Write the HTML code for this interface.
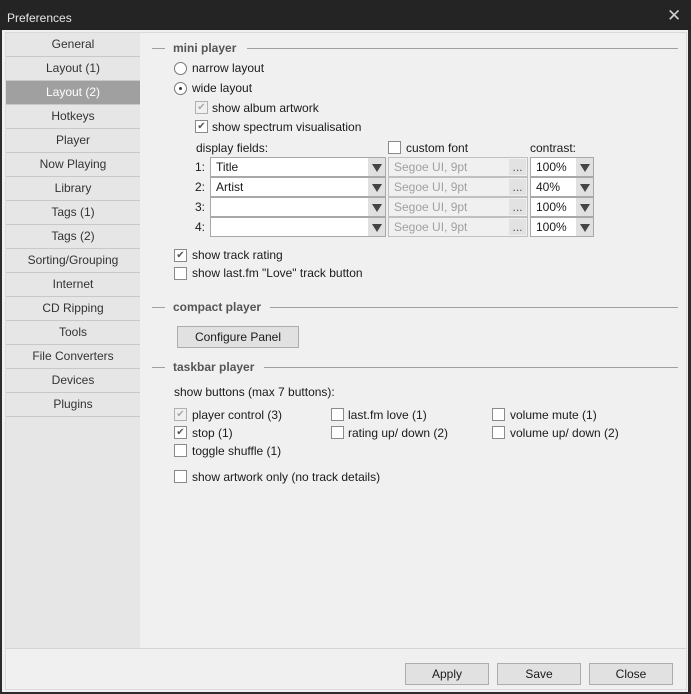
<!DOCTYPE html>
<html><head><style>
*{margin:0;padding:0;box-sizing:border-box}
body{width:691px;height:694px;background:#2b2b2b;font-family:"Liberation Sans",sans-serif;font-size:12px;color:#1a1a1a;position:relative;overflow:hidden}
.a{position:absolute}
.t{position:absolute;white-space:nowrap;line-height:14px}
.nav{position:absolute;left:6px;width:134px;height:24px;line-height:23px;text-align:center;border-bottom:1px solid #c8c8c8;color:#333}
.cb{position:absolute;width:13px;height:13px;border:1px solid #8a8a8a;background:#fff;font-size:10px;line-height:11px;text-align:center;color:#555}
.cb.g{background:#f0f0f0;color:#aaa;border-color:#b0b0b0}
.rd{position:absolute;width:13px;height:13px;border:1px solid #777;border-radius:50%;background:#fff}
.hd{position:absolute;font-weight:bold;color:#555;line-height:14px}
.ln{position:absolute;height:1px;background:#a0a0a0}
.cmb{position:absolute;height:20px;border:1px solid #a8a8a8;background:#fff;line-height:18px;padding-left:5px}
.arr{position:absolute;right:0;top:0;width:17px;height:18px;background:#e0e0e0}
.arr:after{content:"";position:absolute;left:4px;top:6px;border-left:5px solid transparent;border-right:5px solid transparent;border-top:8px solid #444}
.btn{position:absolute;height:22px;border:1px solid #adadad;background:#e1e1e1;text-align:center;line-height:20px}
</style></head><body>
<div class="a" style="left:0;top:0;width:691px;height:30px;background:#242424"></div>
<div class="t" style="left:7px;top:11px;color:#e6e6e6">Preferences</div>
<div class="t" style="left:667px;top:6px;color:#cfcfcf;font-size:17px;line-height:20px">✕</div>
<div class="a" style="left:2px;top:30px;width:686px;height:662px;background:#f0f0f0"></div>
<div class="a" style="left:5px;top:32px;width:682px;height:658px;border:1px solid #dadada"></div>
<div class="a" style="left:6px;top:33px;width:134px;height:615px;background:#e6e6e6"></div>
<div class="a" style="left:6px;top:648px;width:680px;height:1px;background:#d4d4d4"></div>
<div class="nav" style="top:33px">General</div>
<div class="nav" style="top:57px">Layout (1)</div>
<div class="nav" style="top:81px;background:#a0a0a0;color:#fff">Layout (2)</div>
<div class="nav" style="top:105px">Hotkeys</div>
<div class="nav" style="top:129px">Player</div>
<div class="nav" style="top:153px">Now Playing</div>
<div class="nav" style="top:177px">Library</div>
<div class="nav" style="top:201px">Tags (1)</div>
<div class="nav" style="top:225px">Tags (2)</div>
<div class="nav" style="top:249px">Sorting/Grouping</div>
<div class="nav" style="top:273px">Internet</div>
<div class="nav" style="top:297px">CD Ripping</div>
<div class="nav" style="top:321px">Tools</div>
<div class="nav" style="top:345px">File Converters</div>
<div class="nav" style="top:369px">Devices</div>
<div class="nav" style="top:393px">Plugins</div>

<div class="ln" style="left:152px;top:48px;width:13px"></div>
<div class="hd" style="left:173px;top:41px">mini player</div>
<div class="ln" style="left:247px;top:48px;width:431px"></div>
<div class="rd" style="left:174px;top:62px"></div>
<div class="t" style="left:192px;top:61px">narrow layout</div>
<div class="rd" style="left:174px;top:82px"><div class="a" style="left:4px;top:4px;width:3px;height:3px;background:#333;border-radius:50%"></div></div>
<div class="t" style="left:192px;top:81px">wide layout</div>
<div class="cb g" style="left:195px;top:101px">✔</div>
<div class="t" style="left:212px;top:101px">show album artwork</div>
<div class="cb" style="left:195px;top:120px">✔</div>
<div class="t" style="left:212px;top:120px">show spectrum visualisation</div>
<div class="t" style="left:196px;top:141px">display fields:</div>
<div class="cb" style="left:388px;top:141px"></div>
<div class="t" style="left:406px;top:141px">custom font</div>
<div class="t" style="left:530px;top:141px">contrast:</div>

<div class="t" style="left:195px;top:160px">1:</div>
<div class="cmb" style="left:210px;top:157px;width:176px">Title<div class="arr"></div></div>
<div class="cmb" style="left:388px;top:157px;width:140px;color:#a0a0a0;background:#f0f0f0;border-color:#c0c0c0">Segoe UI, 9pt<div class="a" style="right:1px;top:1px;width:17px;height:16px;background:#e2e2e2;color:#555;line-height:16px;text-align:center">...</div></div>
<div class="cmb" style="left:530px;top:157px;width:64px">100%<div class="arr"></div></div>

<div class="t" style="left:195px;top:180px">2:</div>
<div class="cmb" style="left:210px;top:177px;width:176px">Artist<div class="arr"></div></div>
<div class="cmb" style="left:388px;top:177px;width:140px;color:#a0a0a0;background:#f0f0f0;border-color:#c0c0c0">Segoe UI, 9pt<div class="a" style="right:1px;top:1px;width:17px;height:16px;background:#e2e2e2;color:#555;line-height:16px;text-align:center">...</div></div>
<div class="cmb" style="left:530px;top:177px;width:64px">40%<div class="arr"></div></div>

<div class="t" style="left:195px;top:200px">3:</div>
<div class="cmb" style="left:210px;top:197px;width:176px"><div class="arr"></div></div>
<div class="cmb" style="left:388px;top:197px;width:140px;color:#a0a0a0;background:#f0f0f0;border-color:#c0c0c0">Segoe UI, 9pt<div class="a" style="right:1px;top:1px;width:17px;height:16px;background:#e2e2e2;color:#555;line-height:16px;text-align:center">...</div></div>
<div class="cmb" style="left:530px;top:197px;width:64px">100%<div class="arr"></div></div>

<div class="t" style="left:195px;top:220px">4:</div>
<div class="cmb" style="left:210px;top:217px;width:176px"><div class="arr"></div></div>
<div class="cmb" style="left:388px;top:217px;width:140px;color:#a0a0a0;background:#f0f0f0;border-color:#c0c0c0">Segoe UI, 9pt<div class="a" style="right:1px;top:1px;width:17px;height:16px;background:#e2e2e2;color:#555;line-height:16px;text-align:center">...</div></div>
<div class="cmb" style="left:530px;top:217px;width:64px">100%<div class="arr"></div></div>

<div class="cb" style="left:174px;top:249px">✔</div>
<div class="t" style="left:192px;top:248px">show track rating</div>
<div class="cb" style="left:174px;top:267px"></div>
<div class="t" style="left:192px;top:266px">show last.fm "Love" track button</div>

<div class="ln" style="left:152px;top:307px;width:13px"></div>
<div class="hd" style="left:173px;top:300px">compact player</div>
<div class="ln" style="left:270px;top:307px;width:408px"></div>
<div class="btn" style="left:177px;top:326px;width:122px">Configure Panel</div>

<div class="ln" style="left:152px;top:367px;width:13px"></div>
<div class="hd" style="left:173px;top:360px">taskbar player</div>
<div class="ln" style="left:264px;top:367px;width:414px"></div>
<div class="t" style="left:174px;top:385px">show buttons (max 7 buttons):</div>

<div class="cb g" style="left:174px;top:408px">✔</div><div class="t" style="left:192px;top:408px">player control (3)</div>
<div class="cb" style="left:331px;top:408px"></div><div class="t" style="left:348px;top:408px">last.fm love (1)</div>
<div class="cb" style="left:492px;top:408px"></div><div class="t" style="left:510px;top:408px">volume mute (1)</div>
<div class="cb" style="left:174px;top:426px">✔</div><div class="t" style="left:192px;top:426px">stop (1)</div>
<div class="cb" style="left:331px;top:426px"></div><div class="t" style="left:348px;top:426px">rating up/ down (2)</div>
<div class="cb" style="left:492px;top:426px"></div><div class="t" style="left:510px;top:426px">volume up/ down (2)</div>
<div class="cb" style="left:174px;top:444px"></div><div class="t" style="left:192px;top:444px">toggle shuffle (1)</div>
<div class="cb" style="left:174px;top:470px"></div><div class="t" style="left:192px;top:470px">show artwork only (no track details)</div>

<div class="btn" style="left:405px;top:663px;width:84px">Apply</div>
<div class="btn" style="left:497px;top:663px;width:84px">Save</div>
<div class="btn" style="left:589px;top:663px;width:84px">Close</div>
</body></html>
